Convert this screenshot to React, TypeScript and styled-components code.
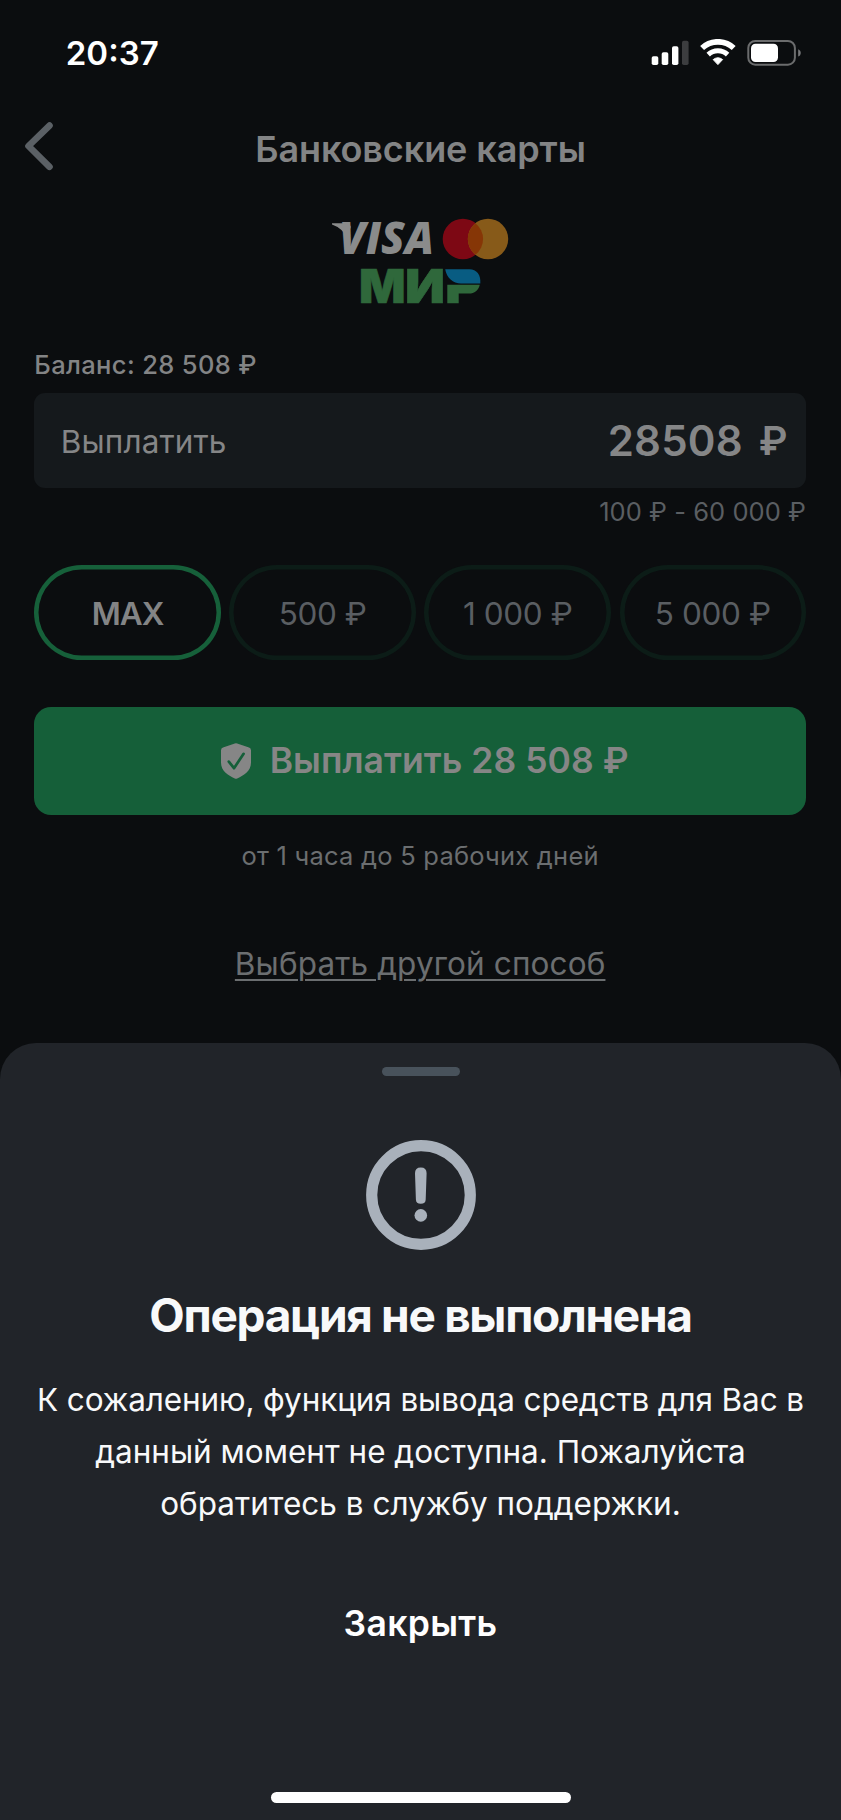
import React from 'react';
import styled, { createGlobalStyle } from 'styled-components';

const GlobalStyle = createGlobalStyle`
  * { box-sizing: border-box; }
  body {
    margin: 0;
    background: #0b0d0f;
    font-family: Inter, "Liberation Sans", sans-serif;
  }
  button { font-family: inherit; cursor: pointer; }
`;

const Screen = styled.div`
  display: flex;
  flex-direction: column;
  width: 841px;
  height: 1820px;
  overflow: hidden;
  background: #0b0d0f;
`;

const StatusBar = styled.header`
  display: flex;
  justify-content: space-between;
  height: 100px;
  padding: 33px 40px 0 65.8px;
  color: #ffffff;
`;

const Time = styled.span`
  font-size: 33px;
  font-weight: 600;
  line-height: 40px;
`;

const StatusIcons = styled.div`
  display: flex;
  align-items: flex-start;
  gap: 11px;
  padding-top: 6px;
`;

const NavBar = styled.nav`
  display: grid;
  grid-template-columns: 80px 1fr 80px;
  align-items: start;
  height: 115px;
  padding-top: 20px;
`;

const BackButton = styled.button`
  display: flex;
  width: 60px;
  height: 52px;
  padding: 0;
  border: 0;
  background: none;
`;

const NavTitle = styled.h1`
  margin: 6.6px 0 0;
  text-align: center;
  font-size: 36px;
  font-weight: 600;
  line-height: 44px;
  letter-spacing: -0.1px;
  color: #838485;
`;

const Page = styled.div`
  display: flex;
  flex-direction: column;
  flex: none;
  height: 1043px;
`;

const Form = styled.main`
  display: flex;
  flex-direction: column;
  padding: 0 35px 0 34.3px;
`;

const CardLogos = styled.svg`
  align-self: center;
  width: 180px;
  height: 90px;
  overflow: visible;
`;

const Balance = styled.div`
  margin-top: 44px;
  font-size: 25.5px;
  font-weight: 500;
  line-height: 32px;
  letter-spacing: 0.36px;
  color: #838485;
`;

const AmountField = styled.label`
  display: flex;
  align-items: center;
  height: 95px;
  margin-top: 12px;
  padding: 0 18.5px 0 26.5px;
  border-radius: 11px;
  background: #15191c;
  color: #858687;
`;

const FieldLabel = styled.span`
  flex: 1;
  padding-top: 2px;
  font-size: 31.5px;
  letter-spacing: 0.12px;
  line-height: 40px;
`;

const Amount = styled.span`
  margin-right: 16px;
  padding-top: 1px;
  font-size: 42px;
  font-weight: 600;
  line-height: 50px;
  letter-spacing: 0.2px;
`;

const Currency = styled.span`
  font-size: 39.5px;
  font-weight: 600;
  line-height: 50px;
`;

const Limits = styled.div`
  margin-top: 8px;
  text-align: right;
  font-size: 25.5px;
  line-height: 32px;
  letter-spacing: 0.05px;
  color: #5a5e62;
`;

const Presets = styled.div`
  display: grid;
  grid-template-columns: repeat(4, 1fr);
  gap: 8.6px;
  margin-top: 37px;
`;

const Preset = styled.button<{ $active?: boolean }>`
  height: 95px;
  padding: 2px 0 0;
  border: 0;
  border-radius: 48px;
  background: none;
  box-shadow: inset 0 0 0 4.5px ${(p) => (p.$active ? '#16603a' : '#0c1c17')};
  font-size: 31.5px;
  font-weight: ${(p) => (p.$active ? 600 : 400)};
  line-height: 40px;
  letter-spacing: ${(p) => (p.$active ? '-1px' : '-0.38px')};
  color: ${(p) => (p.$active ? '#838485' : '#5a5e62')};
`;

const PayButton = styled.button`
  display: flex;
  align-items: center;
  justify-content: center;
  gap: 19px;
  height: 108px;
  margin-top: 46.8px;
  padding: 1px 0 0 9px;
  border: 0;
  border-radius: 17px;
  background: #155f39;
  font-size: 35.5px;
  font-weight: 600;
  line-height: 44px;
  letter-spacing: 0.04px;
  color: #868686;
`;

const Terms = styled.p`
  margin: 25px 0 0;
  text-align: center;
  font-size: 25.5px;
  line-height: 32px;
  letter-spacing: 0.23px;
  color: #6b6e70;
`;

const OtherMethod = styled.a`
  align-self: center;
  margin-top: 72.6px;
  font-size: 31.5px;
  line-height: 40px;
  letter-spacing: 0.12px;
  color: #6b6e70;
  text-decoration: underline;
  text-decoration-thickness: 2px;
  text-underline-offset: 4px;
`;

const Sheet = styled.section`
  display: flex;
  flex: 1;
  flex-direction: column;
  align-items: center;
  padding: 24px 0 17px;
  border-radius: 36px 36px 0 0;
  background: #212429;
  color: #f8f9fa;
`;

const Handle = styled.div`
  width: 78px;
  height: 9px;
  border-radius: 4.5px;
  background: #48525b;
`;

const AlertIcon = styled.svg`
  width: 110px;
  height: 110px;
  margin-top: 64.3px;
`;

const SheetTitle = styled.h2`
  margin: 37px 0 0;
  font-size: 46px;
  font-weight: 700;
  line-height: 56px;
  letter-spacing: -1.3px;
`;

const Message = styled.p`
  display: flex;
  flex-direction: column;
  align-items: center;
  margin: 31px 0 0;
  font-size: 31.5px;
  line-height: 51.7px;
  white-space: nowrap;
`;

const MessageLine = styled.span<{ $tight?: boolean }>`
  letter-spacing: ${(p) => (p.$tight ? '-0.12px' : '0')};
`;

const CloseButton = styled.button`
  margin-top: 72.4px;
  padding: 0;
  border: 0;
  background: none;
  font-size: 35.5px;
  font-weight: 600;
  line-height: 44px;
  letter-spacing: 0.32px;
  color: #ffffff;
`;

const HomeIndicator = styled.div`
  width: 300px;
  height: 11px;
  margin-top: auto;
  border-radius: 5.5px;
  background: #ffffff;
`;

function SignalIcon() {
  return (
    <svg width="38" height="28" viewBox="0 0 38 28" fill="#fff">
      <rect x="0.7" y="17.3" width="6.6" height="8.7" rx="1.8" />
      <rect x="10.7" y="13.3" width="6.6" height="12.7" rx="1.8" />
      <rect x="21" y="7.2" width="6.4" height="18.8" rx="1.8" />
      <rect x="31" y="1.8" width="6.6" height="24.2" rx="1.8" fill="#3c3d3f" />
    </svg>
  );
}

function WifiIcon() {
  return (
    <svg width="36" height="28" viewBox="0 0 36 28" fill="none" stroke="#fff">
      <path d="M2.1 9A23.2 23.2 0 0 1 33.7 9" strokeWidth="5.7" />
      <path d="M8.2 15.6A14.2 14.2 0 0 1 27.6 15.6" strokeWidth="5" />
      <path d="M13.2 20.6A7.7 7.7 0 0 1 22.6 20.6L17.9 25.6Z" fill="#fff" strokeWidth="1" strokeLinejoin="round" />
    </svg>
  );
}

function BatteryIcon() {
  return (
    <svg width="54" height="28" viewBox="0 0 54 28">
      <rect x="1.3" y="2" width="46.6" height="23.7" rx="7" fill="none" stroke="#6b6c6d" strokeWidth="2" />
      <rect x="4" y="4.7" width="27" height="18.3" rx="4.5" fill="#fff" />
      <path d="M51.2 10.2C54.6 11.6 54.6 16.2 51.2 17.6Z" fill="#77787a" />
    </svg>
  );
}

function BackIcon() {
  return (
    <svg width="60" height="52" viewBox="0 120 60 52" fill="none" stroke="#5b6065" strokeWidth="6.6" strokeLinecap="round" strokeLinejoin="round">
      <path d="M49.5 125.6L28.5 146L49.5 166.8" />
    </svg>
  );
}

function ShieldIcon() {
  return (
    <svg width="30" height="36" viewBox="0 0 30 36">
      <path
        d="M13.8 0.5Q15 0 16.2 0.5L28 4.6Q30 5.4 30 7.4V19.5C30 28 23 32.3 16.2 35.4Q15 35.9 13.8 35.4C7 32.3 0 28 0 19.5V7.4Q0 5.4 2 4.6Z"
        fill="#868686"
      />
      <path d="M7.8 18.6L13 25.2L22.6 10.8" fill="none" stroke="#155f39" strokeWidth="2.7" strokeLinecap="round" strokeLinejoin="round" />
    </svg>
  );
}

function PaymentLogos() {
  return (
    <CardLogos viewBox="330 215 180 90">
      <path d="M332 223.2H346Q350 223.4 350.8 227L347 237.5Q342 228 332 224.5Z" fill="#8a8b8b" />
      <text
        x="339"
        y="254.2"
        fontFamily="Open Sans"
        fontSize="43.5"
        fontWeight="800"
        fontStyle="italic"
        fill="#8a8b8b"
        textLength="95"
        lengthAdjust="spacingAndGlyphs"
      >
        VISA
      </text>
      <circle cx="462.9" cy="239" r="20.2" fill="#7d0814" />
      <circle cx="488" cy="239" r="20.2" fill="#875a19" />
      <path d="M475.45 223.2A20.2 20.2 0 0 1 475.45 254.8A20.2 20.2 0 0 1 475.45 223.2Z" fill="#863606" />
      <g fontFamily="Inter" fontSize="47.2" fontWeight="900" fill="#2f683b" stroke="#2f683b" strokeWidth="0.6">
        <text x="358.9" y="303.2" textLength="46.6" lengthAdjust="spacingAndGlyphs">М</text>
        <text x="405" y="303.2" textLength="40" lengthAdjust="spacingAndGlyphs">И</text>
      </g>
      <path d="M445.2 269.3H469.5C476.5 269.3 481 274.5 480.3 283.6H461C453 283.6 446.5 277.5 445.2 269.3Z" fill="#085c82" />
      <path d="M447.3 284.8H479.8C478.5 290.2 474.5 293.6 469 293.6H458.7V303.3H447.3Z" fill="#2f683b" />
    </CardLogos>
  );
}

export default function App() {
  return (
    <>
      <GlobalStyle />
      <Screen>
        <Page>
          <StatusBar>
            <Time>20:37</Time>
            <StatusIcons>
              <SignalIcon />
              <WifiIcon />
              <BatteryIcon />
            </StatusIcons>
          </StatusBar>
          <NavBar>
            <BackButton aria-label="Назад">
              <BackIcon />
            </BackButton>
            <NavTitle>Банковские карты</NavTitle>
          </NavBar>
          <Form>
            <PaymentLogos />
            <Balance>Баланс: 28 508 ₽</Balance>
            <AmountField>
              <FieldLabel>Выплатить</FieldLabel>
              <Amount>28508</Amount>
              <Currency>₽</Currency>
            </AmountField>
            <Limits>100 ₽ - 60 000 ₽</Limits>
            <Presets>
              <Preset $active>MAX</Preset>
              <Preset>500 ₽</Preset>
              <Preset>1 000 ₽</Preset>
              <Preset>5 000 ₽</Preset>
            </Presets>
            <PayButton>
              <ShieldIcon />
              <span>Выплатить 28 508 ₽</span>
            </PayButton>
            <Terms>от 1 часа до 5 рабочих дней</Terms>
            <OtherMethod>Выбрать другой способ</OtherMethod>
          </Form>
        </Page>
        <Sheet>
          <Handle />
          <AlertIcon viewBox="0 0 110 110" fill="#a9b1bb">
            <circle cx="55" cy="55" r="49.3" fill="none" stroke="#a9b1bb" strokeWidth="11.2" />
            <path d="M49 33.2Q49 27.4 54.8 27.4Q60.6 27.4 60.6 33.2L59.7 59.4Q59.6 63.8 54.8 63.8Q50 63.8 49.9 59.4Z" />
            <circle cx="54.8" cy="75.4" r="6.3" />
          </AlertIcon>
          <SheetTitle>Операция не выполнена</SheetTitle>
          <Message>
            <MessageLine $tight>К сожалению, функция вывода средств для Вас в</MessageLine>
            <MessageLine>данный момент не доступна. Пожалуйста</MessageLine>
            <MessageLine>обратитесь в службу поддержки.</MessageLine>
          </Message>
          <CloseButton>Закрыть</CloseButton>
          <HomeIndicator />
        </Sheet>
      </Screen>
    </>
  );
}
